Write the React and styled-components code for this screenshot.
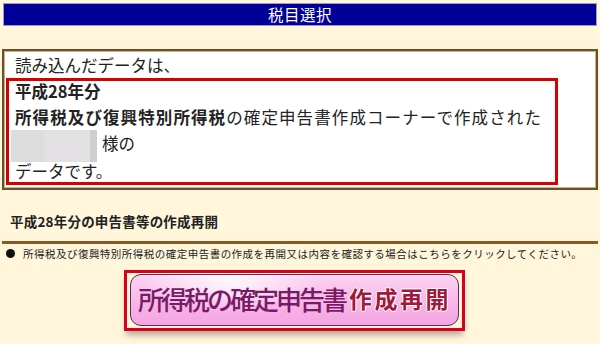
import React from "react";
import styled, { createGlobalStyle } from "styled-components";

const Global = createGlobalStyle`
  html, body { margin: 0; padding: 0; background: #fff6dc; }
  body { font-family: "Noto Sans CJK JP", "Noto Sans", sans-serif; color: #222; }
`;

const Page = styled.div`
  width: 600px;
  height: 344px;
  padding: 3px 2px 0 2px;
  box-sizing: border-box;
  background: #fff6dc;
  overflow: hidden;
`;

const TitleBar = styled.div`
  margin: 0 1px;
  height: 23px;
  box-sizing: border-box;
  background: #000099;
  border: 1px solid #9a9ad0;
  color: #fff;
  font-size: 15.5px;
  line-height: 21px;
  text-align: center;
  letter-spacing: 0.5px;
`;

const DataBox = styled.div`
  margin-top: 23px;
  background: #fff;
  border: 2px solid #6e4f2c;
  box-shadow: inset 0 0 0 1px #c9b28a;
  padding: 1px 38px 3px 2px;
  font-size: 16.5px;
  line-height: 26px;
`;

const Line = styled.div`
  padding-left: ${p => p.$indent || 0}px;
  white-space: nowrap;
  font-weight: ${p => (p.$bold ? 700 : 400)};
  letter-spacing: ${p => p.$spacing || 0}px;
`;

const Highlight = styled.div`
  border: 3px solid #d60000;
  padding: 0 0 0 6px;
`;

const HighlightInner = styled.div`
  margin: -3px 0 -2px;
`;

const Strong = styled.span`
  font-weight: 700;
`;

const Blur = styled.span`
  display: inline-block;
  vertical-align: middle;
  width: 86px;
  height: 32px;
  margin: -4px 5px -4px -4px;
  background: linear-gradient(90deg, #dcdcdc 0 38%, #e2e0e2 38% 92%, #cfcfcf 92%);
`;

const SectionHead = styled.div`
  margin-top: 20px;
  padding: 0 0 9px 8px;
  border-bottom: 3px solid #8a5a22;
  font-size: 13.5px;
  font-weight: 700;
  line-height: 22px;
  letter-spacing: 0.2px;
`;

const Bullet = styled.div`
  display: flex;
  align-items: center;
  gap: 8px;
  margin-top: 2px;
  padding-left: 4px;
  font-size: 10.5px;
  line-height: 16px;
  letter-spacing: 0.48px;
  white-space: nowrap;
`;

const Dot = styled.span`
  width: 9px;
  height: 9px;
  border-radius: 50%;
  background: #111;
  flex: none;
`;

const ButtonRow = styled.div`
  display: flex;
  justify-content: flex-start;
  padding-left: 122px;
  margin-top: 8px;
`;

const ButtonFrame = styled.div`
  width: 341px;
  height: 61px;
  box-sizing: border-box;
  border: 3px solid #d8001c;
  padding: 1px 3px 2px 3px;
  background: #fff6dc;
  box-shadow: 0 6px 6px -2px rgba(90, 80, 70, 0.45);
`;

const PinkButton = styled.button`
  width: 100%;
  height: 100%;
  box-sizing: border-box;
  border: 1px solid #5c2a5c;
  border-radius: 11px;
  background:
    radial-gradient(ellipse 90px 30px at 30% 15%, rgba(255,255,255,0.85), rgba(255,255,255,0) 100%),
    linear-gradient(180deg, #fbd3f1 0%, #f7b6e8 55%, #f4a4e2 100%);
  display: flex;
  align-items: center;
  justify-content: center;
  gap: 4px;
  padding: 0 0 2px 0;
  font-family: "Noto Sans CJK JP", sans-serif;
  cursor: pointer;
`;

const BigLabel = styled.span`
  font-size: 26px;
  font-weight: 500;
  color: #7a1a66;
  letter-spacing: -3px;
  line-height: 1;
`;

const SmallLabel = styled.span`
  font-size: 23px;
  font-weight: 700;
  color: #a0183c;
  letter-spacing: 2.5px;
  line-height: 1;
  text-shadow: 1px 0 0 #fff, -1px 0 0 #fff, 0 1px 0 #fff, 0 -1px 0 #fff;
`;

export default function App() {
  return (
    <>
      <Global />
      <Page>
        <TitleBar>税目選択</TitleBar>
        <DataBox>
          <Line $indent={9}>読み込んだデータは、</Line>
          <Highlight>
            <HighlightInner>
              <Line $bold>平成28年分</Line>
              <Line $spacing={1.1}>
                <Strong>所得税及び復興特別所得税</Strong>の確定申告書作成コーナーで作成された
              </Line>
              <Line>
                <Blur />様の
              </Line>
              <Line>データです。</Line>
            </HighlightInner>
          </Highlight>
        </DataBox>
        <SectionHead>平成28年分の申告書等の作成再開</SectionHead>
        <Bullet>
          <Dot />
          所得税及び復興特別所得税の確定申告書の作成を再開又は内容を確認する場合はこちらをクリックしてください。
        </Bullet>
        <ButtonRow>
          <ButtonFrame>
            <PinkButton>
              <BigLabel>所得税の確定申告書</BigLabel>
              <SmallLabel>作成再開</SmallLabel>
            </PinkButton>
          </ButtonFrame>
        </ButtonRow>
      </Page>
    </>
  );
}
